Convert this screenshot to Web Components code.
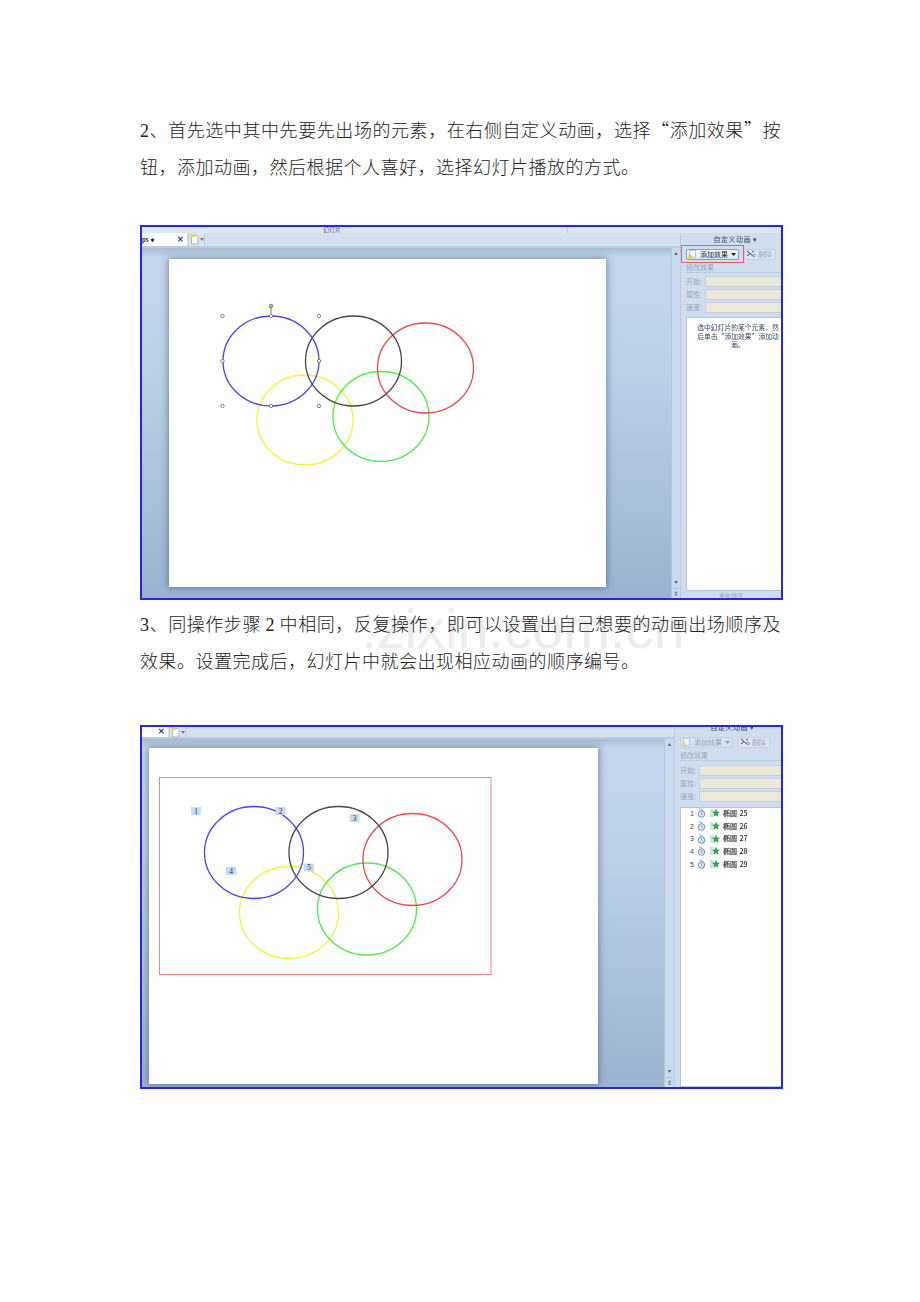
<!DOCTYPE html>
<html lang="zh-CN">
<head>
<meta charset="utf-8">
<title>自定义动画</title>
<style>
  html, body { margin: 0; background: #fff; }
</style>
</head>
<body>
<doc-page>
  <doc-para><span>2</span>、首先选中其中先要先出场的元素，在右侧自定义动画，选择“添加效果”按钮，添加动画，然后根据个人喜好，选择幻灯片播放的方式。</doc-para>

  <ppt-window style="--h:375px;--gap:40px;--band:6px;--tabs:15px;--tab-w:45px;--pad-x:27px;--pad-y:11px;--sb:9px;--pane:101px" band="幻灯片" tab="ps ∗">
    <ppt-slide style="--w:437px;--h:328px">
      <svg viewBox="169 259 437 328" width="437" height="328">
        <g fill="none" stroke-width="1.300">
          <ellipse cx="305" cy="420" rx="48" ry="45" stroke="#f6f23c"/>
          <ellipse cx="381" cy="416.500" rx="48" ry="45" stroke="#44f044"/>
          <ellipse cx="425.500" cy="368" rx="48" ry="45" stroke="#f4444c"/>
          <ellipse cx="353.500" cy="361" rx="48" ry="45" stroke="#444"/>
          <ellipse cx="271" cy="361" rx="48" ry="45" stroke="#4444f4"/>
        </g>
        <path d="M271 307V316" stroke="#777" fill="none"/>
        <g fill="#fff" stroke="#666" stroke-width=".8">
          <circle cx="222.500" cy="316" r="1.700"/><circle cx="271" cy="316" r="1.700"/><circle cx="319" cy="316" r="1.700"/>
          <circle cx="222.500" cy="361" r="1.700"/><circle cx="319" cy="361" r="1.700"/>
          <circle cx="222.500" cy="406" r="1.700"/><circle cx="271" cy="406" r="1.700"/><circle cx="319" cy="406" r="1.700"/>
          <circle cx="271" cy="306" r="1.800" fill="#8fd08f"/>
        </g>
      </svg>
    </ppt-slide>
    <task-pane slot="pane" style="--head:12px;--head-up:1px;--list:274px;--foot:7px;--props-top:3px;--props:41px" highlight>
      <pane-message>选中幻灯片的某个元素，然后单击“添加效果”添加动画。</pane-message>
    </task-pane>
  </ppt-window>

  <doc-para style="--top:5px"><span>3</span>、同操作步骤 <span>2</span> 中相同，反复操作，即可以设置出自己想要的动画出场顺序及效果。设置完成后，幻灯片中就会出现相应动画的顺序编号。</doc-para>

  <ppt-window style="--h:364px;--gap:46px;--band:0px;--tabs:12px;--tab-w:26px;--pad-x:7px;--pad-y:9px;--sb:10px;--pane:107px">
    <ppt-slide style="--w:449px;--h:336px">
      <svg viewBox="149 748 449 336" width="449" height="336">
        <rect x="159.500" y="777.500" width="331.500" height="197" fill="none" stroke="#f28484"/>
        <g fill="none" stroke-width="1.300">
          <ellipse cx="289" cy="912.500" rx="49.500" ry="46" stroke="#f6f23c"/>
          <ellipse cx="367" cy="909" rx="49.500" ry="46" stroke="#44f044"/>
          <ellipse cx="412.500" cy="859.500" rx="49.500" ry="46" stroke="#f4444c"/>
          <ellipse cx="338.500" cy="852.500" rx="49.500" ry="46" stroke="#444"/>
          <ellipse cx="254" cy="852.500" rx="49.500" ry="46" stroke="#4444f4"/>
        </g>
        <g fill="#c5daf5">
          <rect x="191" y="807" width="10" height="8"/><rect x="275.500" y="807" width="10" height="8"/>
          <rect x="349.500" y="814" width="10" height="8"/><rect x="226" y="867" width="10" height="8"/>
          <rect x="304" y="863.500" width="10" height="8"/>
        </g>
        <g font-family="'Liberation Serif',serif" font-size="7.500" fill="#334" text-anchor="middle">
          <text x="196" y="813.500">1</text><text x="280.500" y="813.500">2</text>
          <text x="354.500" y="820.500">3</text><text x="231" y="873.500">4</text>
          <text x="309" y="870">5</text>
        </g>
      </svg>
    </ppt-slide>
    <task-pane slot="pane" style="--head:7px;--head-up:2px;--list:280px;--foot:0px;--props-top:4px;--props:42px" disabled>
      <effect-row num="1" label="椭圆 25"></effect-row>
      <effect-row num="2" label="椭圆 26"></effect-row>
      <effect-row num="3" label="椭圆 27"></effect-row>
      <effect-row num="4" label="椭圆 28"></effect-row>
      <effect-row num="5" label="椭圆 29"></effect-row>
    </task-pane>
  </ppt-window>
</doc-page>

<script>
const CJK = '"Noto Sans CJK SC", "Liberation Sans", sans-serif';

class DocPage extends HTMLElement {
  constructor() {
    super();
    this.attachShadow({ mode: "open" });
    this.shadowRoot.innerHTML = `<style>
      :host { display: block; position: relative; box-sizing: border-box; width: 920px; height: 1302px; padding: 111px 137px 0 140px; overflow: hidden; }
      .mark { position: absolute; left: 361px; top: 597px; font: 56px/64px "Liberation Sans", sans-serif; color: #ececec; white-space: nowrap; }
      .flow { position: relative; }
    </style>
    <div class="mark">.zixin.com.cn</div>
    <div class="flow"><slot></slot></div>`;
  }
}

class DocPara extends HTMLElement {
  constructor() {
    super();
    this.attachShadow({ mode: "open" });
    this.shadowRoot.innerHTML = `<style>
      :host { display: block; margin: var(--top, 0) 2px 0 0; font: 18px/37px ${CJK}; font-weight: 300; color: #222; letter-spacing: .5px; text-align: justify; }
      ::slotted(span) { font-family: "Liberation Serif", serif; line-height: 0; }
    </style><slot></slot>`;
  }
}

class PptWindow extends HTMLElement {
  constructor() {
    super();
    this.attachShadow({ mode: "open" });
    let band = this.getAttribute("band") || "";
    let tab = this.getAttribute("tab") || "";
    this.shadowRoot.innerHTML = `<style>
      :host { display: grid; box-sizing: border-box; height: var(--h); margin-top: var(--gap); border: 2px solid #2424f4; overflow: hidden;
        grid-template-columns: 1fr var(--sb) var(--pane); grid-template-rows: var(--band) var(--tabs) 1fr; background: #cfdeef; }
      .band { grid-column: 1 / -1; background: #dce7f4; font: 6px/5px ${CJK}; color: #667; overflow: hidden; display: flex; }
      .band span { margin-left: 181px; width: 244px; border-right: 1px solid #c4d2e2; }
      .tabs { grid-column: 1 / 3; display: flex; align-items: stretch; background: #d2e0f0; border-bottom: 2px solid #b9cbe0; }
      .tab { width: var(--tab-w); background: #fdfeff; display: flex; align-items: center; justify-content: space-between; padding: 0 3px 0 0; box-sizing: border-box; font: bold 6px/1 ${CJK}; color: #223; filter: blur(.3px); }
      .tab b { font: bold 8px/1 "Liberation Sans", sans-serif; color: #2a3a5a; }
      .new { width: 17px; display: flex; align-items: center; gap: 1px; padding-left: 1px; margin-left: 1px; background: #dbe6f3; border-right: 1px solid #b9cbe0; border-left: 1px solid #b9cbe0; box-sizing: border-box; }
      .work { grid-column: 1; display: flex; align-items: flex-start; padding: var(--pad-y) 0 0 var(--pad-x); min-width: 0; overflow: hidden;
        background: linear-gradient(180deg, #a8bbd2 0, #c3d6ec 9px, #bcd0e8 35%, #9ab3d0 100%); }
      .sb { grid-column: 2; display: flex; flex-direction: column; align-items: center; justify-content: space-between; background: #c9daef; border-left: 1px solid #b3c6dc; box-sizing: border-box; font: 6px/9px "DejaVu Sans", sans-serif; color: #555; }
      .sb i { font-style: normal; display: block; height: 9px; width: 100%; text-align: center; }
      .sb .low { border-top: 1px solid #aebfd4; margin-top: 2px; }
      .pane { grid-column: 3; grid-row: 2 / 4; min-width: 0; }
    </style>
    <div class="band"><span>${band}</span></div>
    <div class="tabs">
      <div class="tab"><span>${tab}</span><b>✕</b></div>
      <div class="new">
        <svg width="9" height="11" viewBox="0 0 9 11"><path d="M1.500 1.500h5l1.500 1.500v7h-6.500z" fill="#fff" stroke="#8a9ab0" stroke-width=".7"/><rect x="0" y="0" width="4" height="3.500" fill="#f6d92c"/></svg>
        <svg width="4" height="3" viewBox="0 0 4 3"><path d="M0 0h4L2 3z" fill="#777"/></svg>
      </div>
    </div>
    <div class="work"><slot></slot></div>
    <div class="sb"><i>▴</i><div><i>▾</i><i class="low">⇕</i></div></div>
    <div class="pane"><slot name="pane"></slot></div>`;
  }
}

class PptSlide extends HTMLElement {
  constructor() {
    super();
    this.attachShadow({ mode: "open" });
    this.shadowRoot.innerHTML = `<style>
      :host { display: block; flex: none; width: var(--w); height: var(--h); background: #fff; box-shadow: 0 0 7px 1px rgba(60, 80, 110, .55); }
      ::slotted(svg) { display: block; }
    </style><slot></slot>`;
  }
}

class TaskPane extends HTMLElement {
  constructor() {
    super();
    this.attachShadow({ mode: "open" });
    let off = this.hasAttribute("disabled");
    let frame = this.hasAttribute("highlight") ? "#e8606c" : "transparent";
    let prop = (name) => `<div class="prop"><span>${name}:</span><div></div></div>`;
    this.shadowRoot.innerHTML = `<style>
      :host { display: flex; flex-direction: column; height: 100%; box-sizing: border-box; background: #cfdeef; border-left: 1px solid #b9cbe0; font: 7px/1 ${CJK}; color: #33475f; overflow: hidden; }
      .txt { filter: blur(.35px); }
      .head { flex: none; box-sizing: border-box; height: var(--head); padding-bottom: var(--head-up); display: flex; align-items: flex-end; justify-content: center; padding-left: 9px; line-height: 9px; letter-spacing: .5px; overflow: hidden; }
      .tools { flex: none; display: flex; align-items: center; height: 18px; margin-top: ${off ? "-1px" : "0"}; }
      .frame { position: relative; z-index: 1; flex: none; box-sizing: border-box; border: 1px solid ${frame}; padding: 0 4px; height: 18px; display: flex; align-items: center; }
      .btn { display: flex; align-items: center; gap: 2px; height: 11px; box-sizing: border-box; border: 1px solid #8d9fb8; border-radius: 2px; background: linear-gradient(#f8fbff, #dbe6f4); }
      .add { width: 53px; padding-left: 1px; color: ${off ? "#8d9db0" : "#223"}; ${off ? "border-color:#c2d0e2; background:#d6e2f1;" : ""} }
      .add .arrow { margin-left: auto; margin-right: 2px; }
      .del { width: 32px; padding-left: 1px; color: #98a6b8; border-color: #c2d0e2; background: #dce6f3; }
      .label { flex: none; margin-left: 5px; line-height: 9px; color: #96a6bb; border-bottom: 1px dotted #aab9cc; box-sizing: border-box; height: 10px; }
      .props { flex: none; margin-top: var(--props-top); height: var(--props); }
      .prop { display: flex; align-items: center; height: 11px; margin-bottom: 2px; color: #96a6bb; padding-left: 5px; }
      .prop span { width: 19px; }
      .prop div { flex: 1; align-self: stretch; background: #ebe8d9; border: 1px solid #c4d0de; border-right: 0; }
      .list { flex: none; height: var(--list); margin-left: 5px; background: #fff; border: 1px solid #b4c4d8; border-right: 0; box-sizing: border-box; overflow: hidden; }
      .foot { flex: none; height: var(--foot); display: flex; justify-content: center; gap: 4px; color: #98a6b8; padding-top: 2px; font-size: 6px; overflow: hidden; }
    </style>
    <div class="head"><span class="txt">自定义动画 ▾</span></div>
    <div class="tools">
      <div class="frame"><div class="btn add">
        <svg width="10" height="9" viewBox="0 0 10 9"><path d="M1.500.5h6v7h-6z" fill="#fff" stroke="#93a3b8" stroke-width=".7" opacity="${off ? ".6" : "1"}"/><path d="M2 3.500l1 2 2 .3-1.500 1.400.4 1.800-1.900-1-1.900 1 .4-1.800L0 5.800l2-.3z" fill="#f0c83c" opacity="${off ? ".5" : "1"}"/></svg>
        <span class="txt">添加效果</span>
        <svg class="arrow" width="5" height="3" viewBox="0 0 5 3"><path d="M0 0h5L2.500 3z" fill="${off ? "#8d9db0" : "#222"}"/></svg>
      </div></div>
      <div class="btn del">
        <svg width="10" height="8" viewBox="0 0 10 8"><path d="M1 1l6 5M1 6l3-2.500M6 2l2-1" stroke="#445" stroke-width="1" fill="none"/><circle cx="8" cy="5.500" r="1.300" fill="none" stroke="#778" stroke-width=".7"/></svg>
        <span class="txt">删除</span>
      </div>
    </div>
    <div class="label"><span class="txt">修改效果</span></div>
    <div class="props">${prop("开始")}${prop("属性")}${prop("速度")}</div>
    <div class="list"><slot></slot></div>
    <div class="foot"><span class="txt">重新排序</span></div>`;
  }
}

class PaneMessage extends HTMLElement {
  constructor() {
    super();
    this.attachShadow({ mode: "open" });
    this.shadowRoot.innerHTML = `<style>
      :host { display: block; padding: 5px 1px 0 9px; font: 6.800px/8.500px ${CJK}; color: #33475f; text-align: center; filter: blur(.3px); }
    </style><slot></slot>`;
  }
}

class EffectRow extends HTMLElement {
  constructor() {
    super();
    this.attachShadow({ mode: "open" });
    let num = this.getAttribute("num");
    let label = this.getAttribute("label");
    this.shadowRoot.innerHTML = `<style>
      :host { display: flex; align-items: center; height: 12.700px; padding-left: 9px; font: 7px/1 ${CJK}; color: #223; }
      :host(:first-child) { margin-top: -1px; }
      .n { width: 6px; font-family: "Liberation Sans", sans-serif; color: #445; }
      .t { margin-left: 3px; filter: blur(.25px); font-weight: 500; word-spacing: 1px; }
      svg { flex: none; }
    </style>
    <span class="n">${num}</span>
    <svg width="9" height="10" viewBox="0 0 9 10" style="margin-left:1px"><path d="M2 1.500c1.500-1 3-.5 3.500 1" fill="none" stroke="#6a7f9a" stroke-width=".7"/><circle cx="4.500" cy="6" r="3.300" fill="#d8e8fa" stroke="#4f78b8" stroke-width=".8"/><path d="M4.500 4v2l1.500 1" stroke="#4f78b8" stroke-width=".6" fill="none"/></svg>
    <svg width="10" height="10" viewBox="0 0 10 10" style="margin-left:4px"><rect x="0" y="1" width="3.500" height="8" fill="#d6dfe8"/><path d="M6 .5l1.200 3 2.800.3-2.100 2 .6 3-2.500-1.500-2.500 1.500.6-3-2.100-2 2.800-.3z" fill="#2fa84a"/></svg>
    <span class="t">${label}</span>`;
  }
}

customElements.define("doc-page", DocPage);
customElements.define("doc-para", DocPara);
customElements.define("ppt-window", PptWindow);
customElements.define("ppt-slide", PptSlide);
customElements.define("task-pane", TaskPane);
customElements.define("pane-message", PaneMessage);
customElements.define("effect-row", EffectRow);
</script>
</body>
</html>
